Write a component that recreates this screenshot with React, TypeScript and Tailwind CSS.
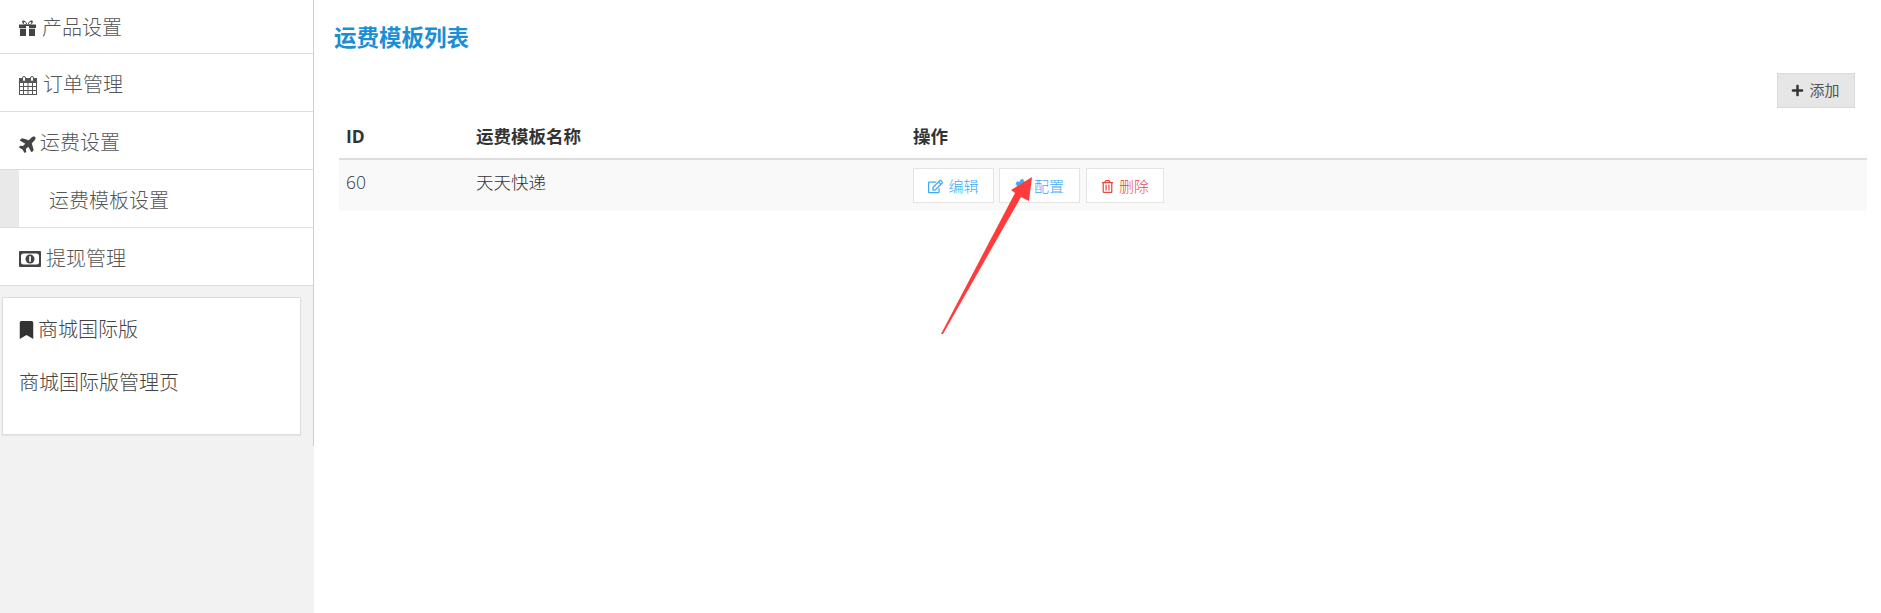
import React from "react";
import { FaPlane, FaBookmark, FaPlus, FaRegEdit, FaRegTrashAlt, FaCog } from "react-icons/fa";

const font = "font-['Open_Sans','Noto_Sans_CJK_SC',sans-serif]";

function GiftIcon() {
  return (
    <svg width="17" height="16" viewBox="0 0 17 16" fill="#444">
      <path d="M8.5 4.5C7 1 5 0 3.8 0.6 2.6 1.3 3 3.5 5 4.5h7c2-1 2.4-3.2 1.2-3.9C12 0 10 1 8.5 4.5zM5.4 2c.8 0 1.4.8 1.8 2H5.2C4.4 3.2 4.4 2 5.4 2zm6.2 0c1 0 1 1.2.2 2H9.8c.4-1.2 1-2 1.8-2z" fillRule="evenodd" />
      <rect x="0" y="4.5" width="17" height="3.5" />
      <rect x="1" y="8.7" width="15" height="7.3" />
      <rect x="7" y="6" width="3" height="10" fill="#fff" />
    </svg>
  );
}

function CalendarIcon() {
  return (
    <svg width="18" height="19" viewBox="0 0 18 19" fill="none" stroke="#555" strokeWidth="1">
      <rect x="0.5" y="2.5" width="17" height="16" />
      <rect x="1" y="3" width="16" height="4" fill="#555" stroke="none" />
      <path d="M0.5 10.5h17M0.5 14.5h17M4.5 7v11M9 7v11M13.5 7v11" />
      <rect x="3.5" y="0.5" width="3" height="5" rx="1.5" fill="#fff" />
      <rect x="11.5" y="0.5" width="3" height="5" rx="1.5" fill="#fff" />
    </svg>
  );
}

function MoneyIcon() {
  return (
    <svg width="22" height="16" viewBox="0 0 22 16">
      <rect x="0" y="0" width="22" height="16" rx="1" fill="#444" />
      <rect x="2" y="2.5" width="18" height="11" rx="2.5" fill="#fff" />
      <circle cx="11" cy="8" r="4.5" fill="#444" />
      <rect x="10.2" y="5.2" width="1.7" height="5.6" fill="#fff" />
    </svg>
  );
}

function MenuRow({ icon, iconWidth, label }: { icon: React.ReactNode; iconWidth: string; label: string }) {
  return (
    <div className="h-[58px] pt-[5px] bg-white border-b border-[#ddd] flex items-center pl-[19px] text-[20px] text-[#555] font-light">
      <span className={`${iconWidth} flex items-center`}>{icon}</span>
      <span>{label}</span>
    </div>
  );
}

function ActionButton({ icon, label, color, width }: { icon: React.ReactNode; label: string; color: string; width: string }) {
  return (
    <button className={`h-[35px] pt-[1px] ${width} ${color} bg-white border border-[#e4e4e4] flex items-center justify-center text-[15px] gap-[5px]`}>
      {icon}
      <span>{label}</span>
    </button>
  );
}

export default function App() {
  return (
    <div className={`relative flex h-[613px] w-[1881px] overflow-hidden bg-white ${font}`}>
      <aside className="w-[314px] shrink-0 bg-[#f2f2f2]">
        <div className="border-r border-[#cfcfcf] h-[446px]">
          <div className="h-[54px] pt-[3px] bg-white border-b border-[#ddd] flex items-center pl-[19px] text-[20px] text-[#555] font-light">
            <span className="w-[23px] flex items-center"><GiftIcon /></span>
            <span>产品设置</span>
          </div>
          <MenuRow icon={<CalendarIcon />} iconWidth="w-[24px]" label="订单管理" />
          <MenuRow icon={<FaPlane className="text-[19px] text-[#444] -rotate-45" />} iconWidth="w-[21px]" label="运费设置" />
          <div className="h-[58px] bg-[#e9e9e9] border-b border-[#ddd] pl-[19px]">
            <div className="h-full pt-[5px] bg-white flex items-center pl-[30px] text-[20px] text-[#555] font-light">运费模板设置</div>
          </div>
          <MenuRow icon={<MoneyIcon />} iconWidth="w-[27px]" label="提现管理" />
          <div className="mt-[11px] ml-[2px] w-[299px] h-[138px] bg-white border border-[#ddd] shadow-[0_1px_1px_rgba(0,0,0,0.05)] pl-[16px] pt-[18px] text-[20px] text-[#444] font-light">
            <div className="flex items-center h-[28px]">
              <FaBookmark className="text-[18px] w-[15px] mr-[4px] text-[#333]" />
              <span>商城国际版</span>
            </div>
            <div className="mt-[25px] h-[28px] flex items-center">商城国际版管理页</div>
          </div>
        </div>
      </aside>
      <main className="flex-1 min-w-0 pl-[20px]">
        <h1 className="mt-[23px] text-[22.5px] leading-[30px] font-bold text-[#1a8fd6]">运费模板列表</h1>
        <div className="mt-[20px] flex justify-end pr-[26px]">
          <button className="w-[78px] h-[35px] pr-[1px] bg-[#e6e6e6] border border-[#d9d9d9] flex items-center justify-center gap-[5px] text-[15px] text-[#555]">
            <FaPlus className="text-[13px] text-[#333]" />
            <span>添加</span>
          </button>
        </div>
        <div className="ml-[5px] w-[1528px]">
          <div className="grid grid-cols-[137px_437px_1fr] h-[52px] pt-[7px] items-center border-b-[2px] border-[#ddd] text-[17.5px] font-bold text-[#333]">
            <div className="pl-[7px]">ID</div>
            <div>运费模板名称</div>
            <div>操作</div>
          </div>
          <div className="grid grid-cols-[137px_437px_1fr] h-[51px] bg-[#f9f9f9] text-[17.5px] text-[#333] font-light">
            <div className="pl-[7px] pt-[9px]">60</div>
            <div className="pt-[9px]">天天快递</div>
            <div className="pt-[8px] flex gap-[5px] items-start">
              <ActionButton icon={<FaRegEdit className="text-[15px]" />} label="编辑" color="text-[#3fa9f5]" width="w-[81px]" />
              <ActionButton icon={<FaCog className="text-[14px]" />} label="配置" color="text-[#3fa9f5]" width="w-[81px]" />
              <ActionButton icon={<FaRegTrashAlt className="text-[13px]" />} label="删除" color="text-[#e8483f]" width="w-[78px] ml-[1px]" />
            </div>
          </div>
        </div>
      </main>
      <svg className="absolute left-0 top-0 pointer-events-none" width="1881" height="613">
        <polygon points="1032,177 1029,201 1021,197 943,334 941,334 1015,193 1011,190" fill="#ff3b3b" />
      </svg>
    </div>
  );
}
